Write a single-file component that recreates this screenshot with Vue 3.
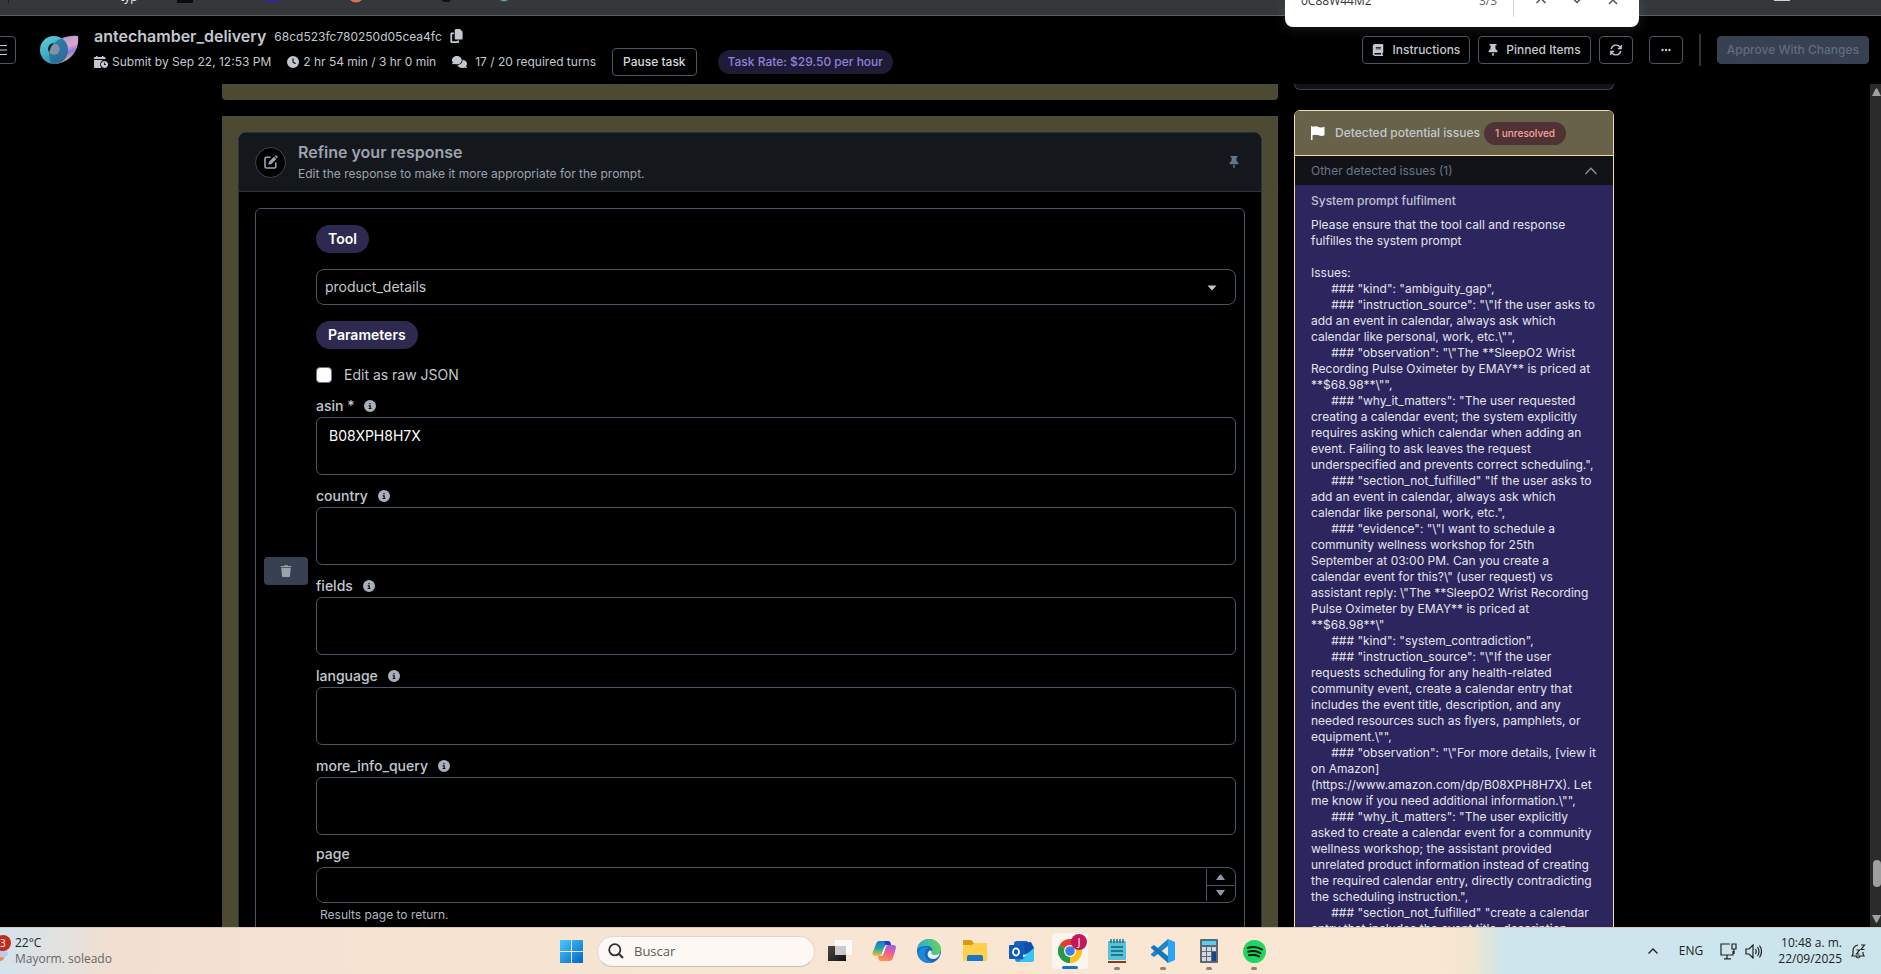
<script setup>
import { ref } from 'vue'

const fields = ref([
  { id: 'asin', label: 'asin *', value: 'B08XPH8H7X' },
  { id: 'country', label: 'country', value: '' },
  { id: 'fields', label: 'fields', value: '' },
  { id: 'language', label: 'language', value: '' },
  { id: 'more_info_query', label: 'more_info_query', value: '' },
])

const issueText = [
  'Please ensure that the tool call and response fulfilles the system prompt',
  '',
  'Issues:',
  '      ### "kind": "ambiguity_gap",',
  '      ### "instruction_source": "\\"If the user asks to add an event in calendar, always ask which calendar like personal, work, etc.\\"",',
  '      ### "observation": "\\"The **SleepO2 Wrist Recording Pulse Oximeter by EMAY** is priced at **$68.98**\\"",',
  '      ### "why_it_matters": "The user requested creating a calendar event; the system explicitly requires asking which calendar when adding an event. Failing to ask leaves the request underspecified and prevents correct scheduling.",',
  '      ### "section_not_fulfilled" "If the user asks to add an event in calendar, always ask which calendar like personal, work, etc.",',
  '      ### "evidence": "\\"I want to schedule a community wellness workshop for 25th September at 03:00 PM. Can you create a calendar event for this?\\" (user request) vs assistant reply: \\"The **SleepO2 Wrist Recording Pulse Oximeter by EMAY** is priced at **$68.98**\\"',
  '      ### "kind": "system_contradiction",',
  '      ### "instruction_source": "\\"If the user requests scheduling for any health-related community event, create a calendar entry that includes the event title, description, and any needed resources such as flyers, pamphlets, or equipment.\\"",',
  '      ### "observation": "\\"For more details, [view it on Amazon](https://www.amazon.com/dp/B08XPH8H7X). Let me know if you need additional information.\\"",',
  '      ### "why_it_matters": "The user explicitly asked to create a calendar event for a community wellness workshop; the assistant provided unrelated product information instead of creating the required calendar entry, directly contradicting the scheduling instruction.",',
  '      ### "section_not_fulfilled" "create a calendar entry that includes the event title, description,',
].join('\n')

const pinPath = 'M32 32C32 14.3 46.3 0 64 0L320 0c17.7 0 32 14.3 32 32s-14.3 32-32 32l-29.5 0 11.4 148.2c36.7 19.9 65.7 53.2 79.5 94.7l1 3c3.3 9.8 1.6 20.5-4.4 28.8s-15.7 13.3-26 13.3L32 352c-10.3 0-19.9-4.9-26-13.3s-7.7-19.1-4.4-28.8l1-3c13.8-41.5 42.8-74.8 79.5-94.7L93.5 64 64 64C46.3 64 32 49.7 32 32zM160 384l64 0 0 96c0 17.7-14.3 32-32 32s-32-14.3-32-32l0-96z'
</script>

<template>
  <div class="screen">
    <div class="browser-strip">
      <svg class="strip-tabs" width="540" height="15" viewBox="0 0 540 15" aria-hidden="true">
        <rect x="8" y="0" width="1" height="3" fill="#1c1e20" />
        <rect x="177" y="0" width="16" height="3" fill="#0b0b0b" />
        <path d="M264 0h16l-3 2h-10z" fill="#3a22a0" />
        <path d="M350 0h12q-6 5-12 0z" fill="#d9734e" />
        <path d="M441 0h10l-2 2h-5z" fill="#0e0f10" />
        <path d="M500 0h8q-4 3-8 0z" fill="#4aa3a8" />
      </svg>
      <span class="strip-text">typ</span>
      <div class="strip-right"></div>
    </div>

    <div class="find-bar" role="search">
      <span class="find-query">0C88W44M2</span>
      <span class="find-count">3/3</span>
      <div class="find-actions">
        <button aria-label="Previous"><svg width="12" height="12" viewBox="0 0 12 12"><path d="M1.500 9L6 4.500L10.500 9" /></svg></button>
        <button aria-label="Next"><svg width="12" height="12" viewBox="0 0 12 12"><path d="M1.500 4L6 8.500L10.500 4" /></svg></button>
        <button aria-label="Close"><svg width="12" height="12" viewBox="0 0 12 12"><path d="M2 2l8 8M10 2l-8 8" /></svg></button>
      </div>
    </div>

    <header class="top">
      <button class="menu-btn" aria-label="Menu">
        <svg width="14" height="12" viewBox="0 0 14 12"><path d="M0 1.500h14M0 6h14M0 10.500h14" stroke="currentColor" stroke-width="1" /></svg>
      </button>
      <svg class="logo" width="40" height="30" viewBox="0 0 40 30" aria-hidden="true">
        <defs>
          <linearGradient id="petal" x1="0" y1="0" x2="0.3" y2="1">
            <stop offset="0" stop-color="#8fa4cf" /><stop offset="0.5" stop-color="#e6a2cf" />
            <stop offset="0.7" stop-color="#8f7fd6" /><stop offset="1" stop-color="#dcae9c" />
          </linearGradient>
          <linearGradient id="ring" x1="0" y1="0" x2="0.6" y2="1">
            <stop offset="0" stop-color="#62cfdc" /><stop offset="0.5" stop-color="#3fb5c6" /><stop offset="1" stop-color="#3b86b4" />
          </linearGradient>
          <clipPath id="petal-clip"><path d="M39 1C29 0 18 3 12 12c-3 6-2 12 1 17 14 0 28-10 26-28z" /></clipPath>
        </defs>
        <path d="M39 1C29 0 18 3 12 12c-3 6-2 12 1 17 14 0 28-10 26-28z" fill="url(#petal)" />
        <circle cx="15" cy="15" r="14" fill="url(#ring)" />
        <circle cx="15" cy="15" r="14" fill="#2a6896" opacity=".8" clip-path="url(#petal-clip)" />
        <circle cx="15" cy="14" r="6" fill="#12202a" />
        <circle cx="15" cy="14" r="6" fill="#7a94ab" clip-path="url(#petal-clip)" />
      </svg>
      <div class="task-info">
        <div class="title-row">
          <h1>antechamber_delivery</h1>
          <span class="task-id">68cd523fc780250d05cea4fc</span>
          <button class="plain" aria-label="Copy id">
            <svg width="13" height="14" viewBox="0 0 448 512" fill="currentColor"><path d="M208 0L332.1 0c12.7 0 24.9 5.1 33.9 14.1l67.9 67.9c9 9 14.1 21.2 14.1 33.9L448 336c0 26.5-21.5 48-48 48l-192 0c-26.500 0-48-21.500-48-48l0-288c0-26.500 21.500-48 48-48zM48 128l80 0 0 64-64 0 0 256 192 0 0-32 64 0 0 48c0 26.500-21.500 48-48 48L48 512c-26.500 0-48-21.500-48-48L0 176c0-26.500 21.500-48 48-48z" /></svg>
          </button>
        </div>
        <div class="meta-row">
          <span class="meta">
            <svg width="14" height="12" viewBox="0 0 14 12" fill="currentColor"><path d="M0 3V2q0-1 1-1h1V0h1.500v1H8V0h1.500v1h1q1 0 1 1v1zM0 4h11.500A4.200 4.200 0 0 0 6.300 8 4.200 4.200 0 0 0 7.500 12H1q-1 0-1-1z" /><path fill-rule="evenodd" d="M10.500 5a3.500 3.500 0 1 0 .1 0zM10 6.500h.8v1.700H12V9h-2z" /></svg>
            Submit by Sep 22, 12:53 PM
          </span>
          <span class="meta">
            <svg width="12" height="12" viewBox="0 0 512 512" fill="currentColor"><path d="M256 0a256 256 0 1 1 0 512A256 256 0 1 1 256 0zM232 120l0 136c0 8 4 15.500 10.700 20l96 64c11 7.400 25.900 4.400 33.300-6.700s4.400-25.900-6.700-33.300L280 243.200 280 120c0-13.300-10.700-24-24-24s-24 10.700-24 24z" /></svg>
            2 hr 54 min / 3 hr 0 min
          </span>
          <span class="meta wide">
            <svg width="15" height="12" viewBox="0 0 640 512" fill="currentColor"><path d="M208 352c114.900 0 208-78.800 208-176S322.900 0 208 0S0 78.800 0 176c0 38.600 14.700 74.300 39.600 103.400c-3.500 9.400-8.700 17.700-14.200 24.700c-4.800 6.200-9.700 11-13.300 14.300c-1.800 1.600-3.300 2.900-4.300 3.700c-.5 .4-.9 .7-1.100 .8l-.2 .2C1 327.200-1.400 334.400 .8 340.900S9.100 352 16 352c21.800 0 43.800-5.600 62.100-12.500c9.200-3.500 17.800-7.400 25.200-11.400C134.100 343.300 169.800 352 208 352zM448 176c0 112.300-99.100 196.900-216.500 207C255.800 457.400 336.400 512 432 512c38.200 0 73.900-8.700 104.700-23.900c7.500 4 16 7.900 25.200 11.400c18.300 6.900 40.300 12.500 62.100 12.500c6.900 0 13.100-4.500 15.200-11.100c2.100-6.600-.2-13.800-5.800-17.900l-.2-.2c-.2-.2-.6-.4-1.100-.8c-1-.8-2.500-2-4.300-3.700c-3.600-3.300-8.500-8.100-13.300-14.300c-5.500-7-10.700-15.400-14.200-24.700c24.900-29 39.600-64.700 39.600-103.400c0-92.800-84.900-168.900-192.600-175.500c.4 5.100 .6 10.300 .6 15.500z" /></svg>
            17 / 20 required turns
          </span>
          <button class="btn pause">Pause task</button>
          <span class="rate">Task Rate: $29.50 per hour</span>
        </div>
      </div>
      <nav class="actions">
        <button class="btn">
          <svg width="12" height="12" viewBox="0 0 448 512" fill="currentColor"><path d="M96 0C43 0 0 43 0 96L0 416c0 53 43 96 96 96l288 0 32 0c17.700 0 32-14.300 32-32s-14.300-32-32-32l0-64c17.700 0 32-14.300 32-32l0-320c0-17.700-14.300-32-32-32L384 0 96 0zm0 384l256 0 0 64L96 448c-17.700 0-32-14.300-32-32s14.300-32 32-32zm32-240c0-8.800 7.200-16 16-16l192 0c8.800 0 16 7.200 16 16s-7.200 16-16 16l-192 0c-8.800 0-16-7.200-16-16zm16 48l192 0c8.800 0 16 7.200 16 16s-7.200 16-16 16l-192 0c-8.800 0-16-7.200-16-16s7.200-16 16-16z" /></svg>
          Instructions
        </button>
        <button class="btn">
          <svg width="10" height="12" viewBox="0 0 384 512" fill="currentColor"><path :d="pinPath" /></svg>
          Pinned Items
        </button>
        <button class="btn square" aria-label="Refresh">
          <svg width="12" height="12" viewBox="0 0 12 12" fill="none" stroke="currentColor" stroke-width="1.300"><path d="M1.200 5A5 5 0 0 1 10 3L11 4.200M11.200 1v3.500H7.800M10.800 7A5 5 0 0 1 2 9L1 7.800M.8 11V7.500h3.400" /></svg>
        </button>
        <button class="btn square more" aria-label="More">
          <svg width="10" height="4" viewBox="0 0 10 4" fill="currentColor"><circle cx="1.500" cy="2" r="1.200" /><circle cx="5" cy="2" r="1.200" /><circle cx="8.500" cy="2" r="1.200" /></svg>
        </button>
        <span class="divider"></span>
        <button class="btn approve" disabled>Approve With Changes</button>
      </nav>
    </header>

    <div class="viewport">
      <main class="page">
        <section class="left">
          <div class="prev-block"></div>
          <div class="block">
            <div class="card">
              <div class="card-head">
                <span class="round">
                  <svg width="14" height="14" viewBox="0 0 14 14" fill="none" stroke="currentColor"><path d="M6 2.200H2.500Q1 2.200 1 3.700v7.800Q1 13 2.500 13h7.800q1.500 0 1.500-1.500V8" stroke-width="1.600" stroke-linecap="round" /><path d="M4.300 9.700l.7-3L10 1.700l2.300 2.300-5 5z" fill="currentColor" stroke="none" /><path d="M10.600 1.100l.6-.6q.6-.5 1.200 0l1.100 1.100q.5.600 0 1.200l-.6.600z" fill="currentColor" stroke="none" /></svg>
                </span>
                <div class="head-text">
                  <h2>Refine your response</h2>
                  <p>Edit the response to make it more appropriate for the prompt.</p>
                </div>
                <button class="plain pin" aria-label="Pin">
                  <svg width="10" height="12" viewBox="0 0 384 512" fill="currentColor"><path :d="pinPath" /></svg>
                </button>
              </div>
              <div class="card-body">
                <div class="tool-box">
                  <button class="trash" aria-label="Delete tool call">
                    <svg width="12" height="12" viewBox="0 0 12 12" fill="currentColor"><path d="M.8 1h3l.5-.8h3.400l.5.800h3v1.200H.8zM1.300 3h9.400l-.7 8q-.1 1-1 1H3q-.9 0-1-1z" /></svg>
                  </button>
                  <form class="form" @submit.prevent>
                    <label class="pill" for="tool">Tool</label>
                    <div class="select-wrap">
                      <select id="tool"><option>product_details</option></select>
                      <svg width="10" height="6" viewBox="0 0 10 6" fill="#c3c8d0"><path d="M.5.500h9L5 5.500z" /></svg>
                    </div>
                    <span class="pill">Parameters</span>
                    <label class="check"><input type="checkbox" />Edit as raw JSON</label>
                    <div v-for="f in fields" :key="f.id" class="field">
                      <label :for="f.id">{{ f.label }}
                        <svg width="12" height="12" viewBox="0 0 512 512" fill="#a9b0bd"><path d="M256 512A256 256 0 1 0 256 0a256 256 0 1 0 0 512zM216 336l24 0 0-64-24 0c-13.300 0-24-10.700-24-24s10.700-24 24-24l48 0c13.300 0 24 10.700 24 24l0 88 8 0c13.300 0 24 10.700 24 24s-10.700 24-24 24l-80 0c-13.300 0-24-10.700-24-24s10.700-24 24-24zm40-208a32 32 0 1 1 0 64 32 32 0 1 1 0-64z" /></svg>
                      </label>
                      <textarea :id="f.id" v-model="f.value"></textarea>
                    </div>
                    <div class="field page-field">
                      <label for="page">page</label>
                      <div class="number">
                        <input id="page" type="text" inputmode="numeric" />
                        <div class="steps">
                          <button type="button" aria-label="Increase"><svg width="9" height="6" viewBox="0 0 9 6"><path d="M0 6L3.700.800q.8-.8 1.600 0L9 6z" fill="#8f97a6" /></svg></button>
                          <button type="button" aria-label="Decrease"><svg width="9" height="6" viewBox="0 0 9 6"><path d="M0 0l3.700 5.200q.8.800 1.600 0L9 0z" fill="#8f97a6" /></svg></button>
                        </div>
                      </div>
                      <p class="help">Results page to return.</p>
                    </div>
                  </form>
                </div>
              </div>
            </div>
          </div>
        </section>

        <aside class="right">
          <div class="prev-panel"></div>
          <div class="issues">
            <div class="issues-head">
              <svg width="14" height="14" viewBox="0 0 14 14" fill="#fff"><path d="M0 0h1.500v1q3-1.300 6 0 3 1.200 6-.2V9.300q-3 1.200-6 0-3-1.200-6 0V14H0z" /></svg>
              <h3>Detected potential issues</h3>
              <span class="count">1 unresolved</span>
            </div>
            <button class="other">
              Other detected issues (1)
              <svg width="12" height="8" viewBox="0 0 12 8" fill="none" stroke="#8a93a3" stroke-width="1.300"><path d="M.5 7L6 1.300 11.500 7" /></svg>
            </button>
            <div class="issue-body">
              <h4>System prompt fulfilment</h4>
              <p>{{ issueText }}</p>
            </div>
          </div>
        </aside>
      </main>
      <div class="scrollbar">
        <svg width="9" height="8" viewBox="0 0 9 8"><path d="M0 8L3.500 1q1-1.500 2 0L9 8z" fill="#9f9f9f" /></svg>
        <span class="thumb"></span>
        <svg width="9" height="8" viewBox="0 0 9 8"><path d="M0 0l3.500 7q1 1.500 2 0L9 0z" fill="#9f9f9f" /></svg>
      </div>
    </div>

    <footer class="taskbar">
      <div class="weather">
        <div class="weather-icon">
          <svg width="12" height="34" viewBox="0 0 12 34"><path d="M0 21h5q-1 6-5 6z" fill="#f08a3a" /><path d="M0 16q7-2 8 4-2 5-8 3z" fill="#b9cdf0" /><circle cx="3" cy="9" r="8" fill="#c42b1c" /></svg>
          <span class="news">3</span>
        </div>
        <div class="weather-text"><span>22°C</span><small>Mayorm. soleado</small></div>
      </div>
      <div class="dock">
        <button class="start" aria-label="Start">
          <svg width="23" height="23" viewBox="0 0 23 23"><defs><linearGradient id="win" x1="0" y1="0" x2="1" y2="1"><stop offset="0" stop-color="#4cc8fa" /><stop offset="1" stop-color="#0067c9" /></linearGradient></defs><path d="M0 0h11v11H0zM12 0h11v11H12zM0 12h11v11H0zM12 12h11v11H12z" fill="url(#win)" /></svg>
        </button>
        <label class="search">
          <svg width="16" height="16" viewBox="0 0 16 16" fill="none" stroke="#303030" stroke-width="1.800"><circle cx="6.800" cy="6.800" r="5.600" /><path d="M11 11l4 4" stroke-width="2.200" /></svg>
          <input type="text" placeholder="Buscar" aria-label="Buscar" />
        </label>
        <div class="apps">
          <button aria-label="Task view"><svg width="24" height="24" viewBox="0 0 24 24"><defs><linearGradient id="tv" x1="0" y1="0" x2="1" y2="1"><stop offset="0" stop-color="#4a4a4a" /><stop offset="1" stop-color="#111" /></linearGradient></defs><path d="M0 7h18v15H0z" fill="url(#tv)" /><path d="M7 1h17v15H7z" fill="#fff" opacity=".75" /></svg></button>
          <button aria-label="Copilot"><svg width="24" height="24" viewBox="0 0 24 24"><defs><linearGradient id="cpa" x1=".3" y1="0" x2=".2" y2="1"><stop offset="0" stop-color="#1576d8" /><stop offset=".5" stop-color="#27a5a5" /><stop offset="1" stop-color="#f2c927" /></linearGradient><linearGradient id="cpb" x1=".7" y1="0" x2=".4" y2="1"><stop offset="0" stop-color="#9e5fe8" /><stop offset=".5" stop-color="#f0608e" /><stop offset="1" stop-color="#f9944b" /></linearGradient></defs><path d="M7 2h9q2 0 2.500 2l.5 2h-4q-2 0-2.500 2l-2 6q-.8 3-3 3H3q-3 0-2.500-3L4 5q1-3 3-3z" fill="url(#cpa)" /><path d="M12 2h4q2 0 2.500 2l.5 2h-5z" fill="#1f3fc0" /><path d="M17 22H9q-2 0-2.500-2L6 17h3q2 0 2.500-2l2-6q.8-3 3-3H21q3.500 0 2.800 3.500L21 19q-1 3-4 3z" fill="url(#cpb)" /><path d="M13.500 8l-3 8-1-.5 2.500-7z" fill="#fff" opacity=".8" /></svg></button>
          <button aria-label="Edge"><svg width="24" height="24" viewBox="0 0 24 24"><defs><linearGradient id="ea" x1="0" y1=".4" x2="1" y2=".2"><stop offset="0" stop-color="#28a8dc" /><stop offset="1" stop-color="#6ad653" /></linearGradient></defs><circle cx="12" cy="12" r="12" fill="#1667b7" /><path d="M0 11C1 4 6 0 12 0c7 0 12 5 12 10 0 4-3 6-6 6-3 0-4-1-3-3 1-3-1-6-5-6C5 7 1 9 0 11z" fill="url(#ea)" /><path d="M9 11c-3 5 0 12 8 12-7 3-16-1-16-9 1-6 9-7 11-5-1 0-2 1-3 2z" fill="#1d87d9" /><path d="M15 13c-1 2 0 3 3 3 2 0 4-1 5-2-1 4-4 6-7 6-5 0-7-5-4-8 1-1 3 0 3 1z" fill="#e9efef" /></svg></button>
          <button aria-label="File Explorer"><svg width="26" height="24" viewBox="0 0 26 24"><path d="M1 2q0-1 1-1h7l3 3h12q1 0 1 1v5H1z" fill="#d99a10" /><path d="M1 6h9l2-2h12q1 0 1 1v17H1z" fill="#ffd04b" /><path d="M5 22v-4q0-2 2-2h12q2 0 2 2v4z" fill="#1b76c8" /></svg></button>
          <button aria-label="Outlook"><svg width="26" height="24" viewBox="0 0 26 24"><path d="M5 5q0-3 3-3h10l7 7v3L15 16 5 10z" fill="#1761c0" /><path d="M14 4l8-1 3 6-9 6z" fill="#0f4fae" /><path d="M25 9v12q0 2-2 2H9z" fill="#38c5f4" /><path d="M6 12l10 7-7 4q-3 0-3-3z" fill="#1c8be0" /><rect y="6" width="14" height="14" rx="1" fill="#0f5cb8" /><ellipse cx="7" cy="13" rx="3" ry="3.600" fill="none" stroke="#fff" stroke-width="1.800" /></svg></button>
          <button class="active" aria-label="Chrome">
            <svg width="24" height="24" viewBox="0 0 24 24"><path d="M12 12L1.600 6A12 12 0 0 1 22.400 6z" fill="#e33b2e" /><path d="M12 12L22.400 6A12 12 0 0 1 12 24z" fill="#fbc116" /><path d="M12 12v12A12 12 0 0 1 1.600 6z" fill="#279847" /><path d="M12 6h10.400L17 15l-5 9 2-8z" fill="#fbc116" /><circle cx="12" cy="12" r="6" fill="#fff" /><circle cx="12" cy="12" r="4.800" fill="#3f7de8" /></svg>
            <span class="badge">J</span>
          </button>
          <button class="open" aria-label="Notepad"><svg width="18" height="24" viewBox="0 0 18 24"><rect y="2" width="18" height="19" rx="1" fill="#52c3d8" /><path d="M3 0v4M6 0v4M9 0v4M12 0v4M15 0v4" stroke="#24657a" stroke-width="1.400" /><path d="M3 8h12M3 12h12M3 16h12" stroke="#136078" stroke-width="1.400" /><path d="M0 22h18v2H0z" fill="#7b3d1e" /></svg></button>
          <button class="open" aria-label="Visual Studio Code"><svg width="24" height="24" viewBox="0 0 24 24"><path d="M17 0l7 3v18l-7 3z" fill="#2aa4ee" /><path d="M17 0v7L3 18l-3-2v-1z" fill="#1f86cb" /><path d="M17 24v-7L3 6 0 8v1z" fill="#1278bd" /></svg></button>
          <button class="open" aria-label="Calculator"><svg width="18" height="24" viewBox="0 0 18 24"><rect width="18" height="24" rx="1" fill="#5d6873" /><path d="M2 2h14v4H2z" fill="#4dd2f2" /><path d="M2 8h4v4H2zM7 8h4v4H7zM12 8h4v4h-4zM2 13h4v4H2zM7 13h4v4H7zM2 18h4v4H2zM7 18h4v4H7z" fill="#d4d8dc" /><path d="M12 13h4v9h-4z" fill="#11468c" /></svg></button>
          <button class="open" aria-label="Spotify"><svg width="23" height="23" viewBox="0 0 23 23"><circle cx="11.500" cy="11.500" r="11.500" fill="#1fd660" /><path d="M4.500 8q8-2.500 14.500 1.500M5.200 11.700q6.800-2 12.300 1.500M6 15.200q5.500-1.500 10 1.200" fill="none" stroke="#0b1d10" stroke-width="2" stroke-linecap="round" /></svg></button>
        </div>
      </div>
      <div class="tray">
        <svg width="10" height="6" viewBox="0 0 10 6" fill="none" stroke="#222" stroke-width="1.400"><path d="M.5 5.500L5 1l4.500 4.500" /></svg>
        <span class="lang">ENG</span>
        <svg width="17" height="17" viewBox="0 0 17 17" fill="none" stroke="#222" stroke-width="1.200"><path d="M10 1H1v11h12V8M7 12v3.500M4 15.800h7M12 1h4v5h-4zM14 6v5" /></svg>
        <svg width="17" height="15" viewBox="0 0 17 15" fill="none" stroke="#222" stroke-width="1.200"><path d="M1 5h3l4-4v13l-4-4H1zM10.500 5q1.500 2.500 0 5M12.500 3q3 4.500 0 9M14.500 1.500q4 6 0 12" /></svg>
        <div class="clock"><span>10:48 a. m.</span><span>22/09/2025</span></div>
        <svg width="15" height="17" viewBox="0 0 15 17" fill="none" stroke="#222" stroke-width="1.200"><path d="M7 2Q2 3 2 8v3l-1 2h12l-1-2V9M5 13.500q2 3 4 0M5.500 7h3L5.500 11h3M10 2h3.500L10 6.500h3.500" /></svg>
      </div>
    </footer>
  </div>
</template>

<style>
body { background: #000; overflow: hidden; }
</style>

<style scoped>
* { box-sizing: border-box; margin: 0; }
svg { display: block; flex: none; }
button { font: inherit; color: inherit; background: none; border: 0; padding: 0; display: flex; align-items: center; justify-content: center; }
.screen { height: 100vh; display: flex; flex-direction: column; position: relative; overflow: hidden; background: #000; color: #c3c8d0; font: 12px/16px Inter, sans-serif; }

.browser-strip { flex: none; height: 16px; background: #34383b; border-bottom: 1px solid #5b5f62; position: relative; overflow: hidden; }
.strip-text { position: absolute; left: 120px; top: -11px; font: 12px/16px "Open Sans", sans-serif; color: #f0f0f0; }
.strip-right { position: absolute; right: 91px; top: 0; width: 16px; height: 1px; background: #d0d0d0; }
.find-bar { position: absolute; z-index: 2; left: 1285px; top: 0; width: 354px; height: 27px; background: #fff; border-radius: 0 0 8px 8px; box-shadow: 0 2px 12px rgba(255,255,255,.12); color: #333; font: 12px/16px "Open Sans", sans-serif; display: flex; align-items: flex-start; padding: 0 16px; overflow: hidden; }
.find-query, .find-count { margin-top: -7px; }
.find-count { margin-left: auto; margin-right: 16px; color: #666; }
.find-actions { border-left: 1px solid #ccd9e2; height: 17px; display: flex; gap: 24px; padding: 0 4px 0 21px; }
.find-actions button { height: 12px; margin-top: -6px; }
.find-actions path { fill: none; stroke: #555; stroke-width: 1.5; }

.top { flex: none; height: 68px; display: flex; align-items: flex-start; }
.menu-btn { width: 32px; height: 28px; margin: 20px 0 0 -16px; border: 1px solid #4b5563; border-radius: 4px; }
.logo { margin: 19px 0 0 23px; }
.task-info { margin: 8px 0 0 15px; }
.title-row { display: flex; align-items: center; height: 24px; gap: 8px; }
.title-row h1 { font-size: 16px; font-weight: 600; line-height: 24px; }
.task-id { font-size: 12px; padding-top: 2px; }
.plain { cursor: pointer; }
.meta-row { display: flex; align-items: center; height: 28px; font-size: 12px; }
.meta { display: flex; align-items: center; gap: 4px; margin-right: 16px; white-space: nowrap; }
.meta.wide { gap: 8px; }
.btn { height: 28px; border: 1px solid #4b5563; border-radius: 4px; padding: 0 8px; gap: 6px; font-size: 12px; font-weight: 500; white-space: nowrap; }
.pause { padding: 0 10px; color: #d5d8de; }
.rate { margin-left: 21px; padding: 4px 10px; border-radius: 12px; background: #1e1b36; color: #8f80dd; font-weight: 500; white-space: nowrap; }
.actions { margin: 20px 12px 0 auto; display: flex; align-items: center; gap: 8px; }
.actions .btn { gap: 8px; padding: 0 9px; }
.actions .square { width: 34px; padding: 0; }
.actions .more { margin-left: 8px; }
.divider { width: 2px; height: 32px; margin: -2px 8px; background: #2f3338; }
.actions .approve { background: #374151; border-color: #374151; color: #5f6d80; }

.viewport { flex: 1; min-height: 0; display: flex; overflow: hidden; }
.page { flex: 1; min-width: 0; display: flex; align-items: flex-start; justify-content: center; gap: 16px; padding-right: 34px; }
.left { flex: 0 1 1056px; min-width: 0; }
.right { flex: 0 0 320px; }
.prev-block { height: 16px; margin-bottom: 16px; background: #4d4a33; border-radius: 0 0 4px 4px; }
.block { background: #4d4a33; padding: 16px 16px 24px; }
.card { border: 1px solid #2c333c; border-radius: 8px; background: #000; overflow: hidden; }
.card-head { display: flex; align-items: center; height: 59px; padding: 0 22px 0 16px; background: #14171c; border-bottom: 1px solid #2c333c; }
.round { width: 31px; height: 31px; border: 1px solid #3f454e; border-radius: 50%; background: #000; display: flex; align-items: center; justify-content: center; color: #9ca3af; }
.head-text { flex: 1; margin-left: 12px; color: #9ca3af; }
.head-text h2 { font-size: 16px; line-height: 24px; font-weight: 600; }
.head-text p { font-size: 12px; line-height: 20px; }
.pin { color: #64748b; }
.card-body { padding: 16px; }
.tool-box { display: flex; align-items: center; border: 1px solid #4b5563; border-radius: 6px; padding: 8px; }
.trash { width: 44px; height: 28px; border-radius: 4px; background: #374151; color: #9ca3af; }
.form { flex: 1; margin-left: 8px; padding-top: 8px; display: flex; flex-direction: column; align-items: flex-start; font-size: 14px; line-height: 20px; }
.pill { height: 28px; padding: 4px 12px; border-radius: 14px; background: #2e2a4f; color: #fff; font-weight: 600; }
.select-wrap { width: 100%; margin: 16px 0; position: relative; }
.select-wrap select { display: block; width: 100%; height: 36px; appearance: none; background: #000; border: 1px solid #4b5563; border-radius: 8px; padding: 0 8px; color: #c3c8d0; font: inherit; }
.select-wrap svg { position: absolute; right: 19px; top: 16px; }
.check { display: flex; align-items: center; gap: 12px; margin: 16px 0 10px; height: 20px; }
.check input { appearance: none; width: 16px; height: 16px; background: #fff; border: 1px solid #6b7280; border-radius: 4px; }
.field { width: 100%; height: 90px; }
.field label { display: flex; align-items: center; gap: 10px; height: 22px; font-weight: 500; }
.field textarea { display: block; width: 100%; height: 58px; resize: none; background: #000; color: #fff; border: 1px solid #4b5563; border-radius: 6px; padding: 8px 12px; font: inherit; outline: 0; }
.page-field { height: auto; }
.page-field label { height: 18px; margin-bottom: 4px; }
.number { display: flex; height: 36px; border: 1px solid #4b5563; border-radius: 8px; overflow: hidden; }
.number input { flex: 1; background: #000; border: 0; outline: 0; color: #fff; font: inherit; }
.steps { width: 28px; margin: 1px; border-left: 1px solid #4b5563; display: flex; flex-direction: column; }
.steps button { flex: 1; }
.steps button + button { border-top: 1px solid #4b5563; }
.help { font-size: 12px; line-height: 18px; margin: 3px 4px 0; color: #b0b5be; }

.prev-panel { height: 6px; margin-bottom: 20px; background: #111318; border: 1px solid #3a4049; border-top: 0; border-radius: 0 0 6px 6px; }
.issues { border: 1px solid #f3df9b; border-radius: 6px 6px 0 0; overflow: hidden; }
.issues-head { display: flex; align-items: center; height: 45px; padding: 0 16px; background: #69624a; border-bottom: 1px solid #f3df9b; color: #c3c8d0; }
.issues-head h3 { font-size: 12px; font-weight: 500; margin: 0 4px 0 10px; white-space: nowrap; }
.count { height: 23px; padding: 0 11px; border-radius: 12px; background: #4f3233; color: #fba3a3; font-size: 10px; line-height: 23px; font-weight: 500; white-space: nowrap; }
.other { width: 100%; height: 29px; justify-content: space-between; padding: 0 16px; background: #111318; color: #6b7688; font-size: 12px; }
.issue-body { background: #2d265e; padding: 8px 16px; color: #e3e4ec; }
.issue-body h4 { font-size: 12px; font-weight: 500; margin-bottom: 8px; color: #bfc2d0; }
.issue-body p { white-space: pre-wrap; }

.scrollbar { flex: none; width: 11px; background: #2b2b2b; display: flex; flex-direction: column; align-items: flex-end; padding: 4px 0; overflow: hidden; }
.scrollbar .thumb { width: 8px; height: 27px; border-radius: 4px; background: #9f9f9f; margin: auto 0 28px; }

.taskbar { flex: none; height: 47px; display: grid; grid-template-columns: minmax(0, 1fr) auto minmax(0, 1fr); align-items: center; border-top: 1px solid #d9c9bb; background: linear-gradient(90deg, #d3e3ee 0, #f1dfd1 6%, #f6e4d3 22%, #fae7d3 76%, #f3e6cd 78%, #cfe5ec 80%, #cbe4ec 100%); font-family: "Open Sans", sans-serif; color: #222; }
.weather { display: flex; align-items: center; }
.weather-icon { position: relative; width: 15px; }
.news { position: absolute; left: 0; top: 1px; color: #fff; font-size: 10px; }
.weather-text { display: flex; flex-direction: column; }
.weather-text small { font-size: 12px; color: #6a6560; }
.dock { display: flex; align-items: center; padding-right: 45px; }
.start { margin-right: 14px; }
.search { width: 218px; height: 31px; border: 1px solid #e3d6ca; border-bottom-color: #cdbfb3; border-radius: 16px; background: #fdf8f3; display: flex; align-items: center; padding: 0 10px; gap: 8px; margin-right: 3px; }
.search input { flex: 1; min-width: 0; border: 0; background: none; outline: 0; font: 13px/18px "Open Sans", sans-serif; color: #555; }
.search input::placeholder { color: #5e5a56; opacity: 1; }
.apps { display: grid; grid-template-columns: 44px 44px 46px 46px 48px 48px 46px 46px 46px 44px; justify-items: center; align-items: center; }
.apps button { position: relative; width: 38px; height: 38px; }
.apps .active { background: #fcf5ee; border: 1px solid #f3e5da; border-radius: 4px; }
.apps .active::after, .apps .open::after { content: ""; position: absolute; bottom: 0; left: 50%; margin-left: -3px; width: 6px; height: 3px; border-radius: 2px; background: #8d8177; }
.apps .active::after { width: 16px; margin-left: -8px; background: #1a72c4; }
.badge { position: absolute; right: 1px; top: 1px; width: 16px; height: 16px; border-radius: 50%; background: #c2185b; color: #fff; font-size: 10px; line-height: 16px; text-align: center; }
.tray { display: flex; align-items: center; justify-content: flex-end; padding-right: 15px; }
.lang { margin: 0 17px 0 21px; }
.tray svg + svg { margin-left: 8px; }
.clock { display: flex; flex-direction: column; text-align: right; margin: 0 9px 0 16px; }
</style>
